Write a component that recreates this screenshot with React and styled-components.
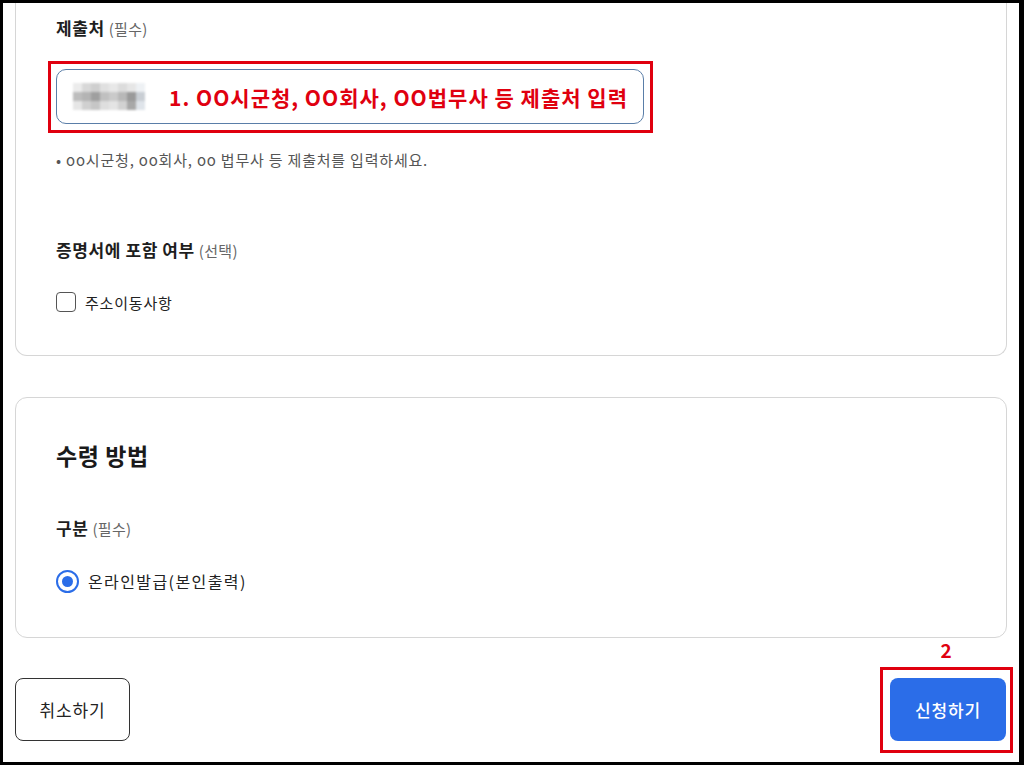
import React from "react";
import styled, { createGlobalStyle } from "styled-components";

const Global = createGlobalStyle`
  html, body { margin: 0; padding: 0; background: #000; }
  body {
    font-family: "Noto Sans CJK KR", "Noto Sans", sans-serif;
    color: #222;
  }
  * { box-sizing: border-box; }
`;

const Frame = styled.div`
  width: 1024px;
  height: 765px;
  border-style: solid;
  border-color: #000;
  border-width: 3px 5px 3px 3px;
  background: #fff;
  overflow: hidden;
  padding: 0 12px 0 12px;
  display: flex;
  flex-direction: column;
`;

const Card = styled.section`
  border: 1px solid #d6d6d6;
  border-radius: 12px;
  background: #fff;
  padding: ${(p) => p.$pad};
  display: flex;
  flex-direction: column;
  margin-top: ${(p) => p.$mt || "0px"};
  ${(p) =>
    p.$cutTop &&
    `border-top: none; border-top-left-radius: 0; border-top-right-radius: 0;`}
`;

const Label = styled.div`
  font-size: 17px;
  font-weight: 700;
  line-height: 24px;
  color: #1e1e1e;
  margin-top: ${(p) => p.$mt || "0px"};
  letter-spacing: 0.6px;
  white-space: nowrap;
`;

const Sub = styled.span`
  font-size: 15px;
  font-weight: 400;
  color: #666;
  margin-left: 4px;
  letter-spacing: 0.3px;
`;

const Heading = styled.h2`
  margin: 0;
  font-size: 23px;
  font-weight: 700;
  line-height: 32px;
  color: #1a1a1a;
  letter-spacing: 0.6px;
`;

const Annotated = styled.div`
  position: relative;
  align-self: flex-start;
  margin-top: ${(p) => p.$mt || "0px"};
  &::before {
    content: "";
    position: absolute;
    top: ${(p) => p.$t};
    left: ${(p) => p.$l};
    right: ${(p) => p.$r};
    bottom: ${(p) => p.$b};
    border: 3px solid #e0000f;
    pointer-events: none;
  }
`;

const InputBox = styled.div`
  width: 588px;
  height: 55px;
  border: 1px solid #5a7ea8;
  border-radius: 10px;
  display: flex;
  align-items: center;
  padding-left: 16px;
  gap: 24px;
`;

const Mosaic = styled.div`
  width: 72px;
  height: 28px;
  display: grid;
  grid-template-columns: repeat(8, 1fr);
  grid-template-rows: repeat(3, 1fr);
  filter: blur(0.8px);
`;

const Cell = styled.div`
  background: ${(p) => p.$c};
`;

const Hint = styled.span`
  color: #e0000f;
  font-size: 21px;
  font-weight: 700;
  letter-spacing: 1px;
  white-space: nowrap;
`;

const Help = styled.p`
  margin: 26px 0 0;
  font-size: 15px;
  line-height: 20px;
  color: #555;
  letter-spacing: 0.8px;
  white-space: nowrap;
`;

const OptionRow = styled.label`
  display: flex;
  align-items: center;
  gap: ${(p) => p.$gap};
  margin-top: ${(p) => p.$mt};
  font-size: ${(p) => p.$fs};
  letter-spacing: ${(p) => p.$ls};
  color: #222;
  height: 24px;
`;

const Check = styled.span`
  width: 20px;
  height: 20px;
  border: 1.5px solid #555;
  border-radius: 4px;
  background: #fff;
`;

const Radio = styled.span`
  width: 23px;
  height: 23px;
  border: 2px solid #2b6de8;
  border-radius: 50%;
  display: flex;
  align-items: center;
  justify-content: center;
  &::after {
    content: "";
    width: 11px;
    height: 11px;
    border-radius: 50%;
    background: #2b6de8;
  }
`;

const Actions = styled.div`
  display: flex;
  justify-content: space-between;
  align-items: flex-start;
  margin-top: 40px;
  padding-right: 1px;
`;

const Button = styled.button`
  width: ${(p) => p.$w};
  height: 63px;
  border-radius: 8px;
  font-family: inherit;
  font-size: 17px;
  letter-spacing: 0.8px;
  font-weight: ${(p) => (p.$primary ? 500 : 400)};
  color: ${(p) => (p.$primary ? "#fff" : "#222")};
  background: ${(p) => (p.$primary ? "#2b6de8" : "#fff")};
  border: ${(p) => (p.$primary ? "none" : "1px solid #333")};
  cursor: pointer;
`;

const Badge = styled.span`
  position: absolute;
  top: -40px;
  left: -4px;
  right: 0;
  text-align: center;
  color: #e0000f;
  font-size: 19px;
  font-weight: 700;
  line-height: 24px;
`;

const mosaic = [
  "#ececec", "#d8d8d8", "#cfcfcf", "#e0e0e0", "#e8e8e8", "#dcdcdc", "#e6e6e6", "#eef1f4",
  "#bdbdbd", "#b4b4b4", "#9f9f9f", "#c0c0c0", "#cacaca", "#b8b8b8", "#9a9a9a", "#c9ced4",
  "#e6e6e6", "#d0d0d0", "#c6c6c6", "#dedede", "#e4e4e4", "#d2d2d2", "#a8a8a8", "#dfe4ea",
];

export default function App() {
  return (
    <>
      <Global />
      <Frame>
        <Card $cutTop $pad="13px 40px 41px">
          <Label>
            제출처<Sub>(필수)</Sub>
          </Label>
          <Annotated $mt="28px" $t="-8px" $l="-8px" $r="-9px" $b="-9px">
            <InputBox>
              <Mosaic>
                {mosaic.map((c, i) => (
                  <Cell key={i} $c={c} />
                ))}
              </Mosaic>
              <Hint>1. OO시군청, OO회사, OO법무사 등 제출처 입력</Hint>
            </InputBox>
          </Annotated>
          <Help>• oo시군청, oo회사, oo 법무사 등 제출처를 입력하세요.</Help>
          <Label $mt="68px">
            증명서에 포함 여부<Sub>(선택)</Sub>
          </Label>
          <OptionRow $mt="27px" $gap="9px" $fs="15px" $ls="0.8px">
            <Check />
            주소이동사항
          </OptionRow>
        </Card>

        <Card $mt="41px" $pad="41px 40px 44px">
          <Heading>수령 방법</Heading>
          <Label $mt="45px">
            구분<Sub>(필수)</Sub>
          </Label>
          <OptionRow $mt="28px" $gap="9px" $fs="16px" $ls="1.4px">
            <Radio />
            온라인발급(본인출력)
          </OptionRow>
        </Card>

        <Actions>
          <Button $w="115px">취소하기</Button>
          <Annotated $t="-11px" $l="-10px" $r="-7px" $b="-12px">
            <Badge>2</Badge>
            <Button $primary $w="116px">
              신청하기
            </Button>
          </Annotated>
        </Actions>
      </Frame>
    </>
  );
}
